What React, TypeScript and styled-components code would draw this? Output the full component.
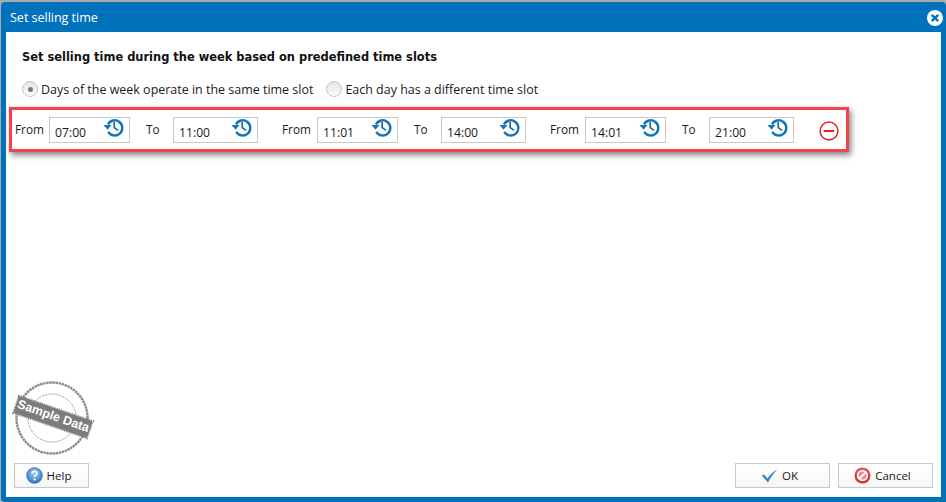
import React from "react";
import styled, { createGlobalStyle } from "styled-components";

const Global = createGlobalStyle`
  html, body { margin: 0; padding: 0; width: 946px; height: 502px; overflow: hidden; background: #a9aaa9; }
  #root { width: 946px; height: 502px; }
  * { box-sizing: border-box; }
`;

const Page = styled.div`
  width: 946px;
  height: 502px;
  padding: 2px 0 0 1px;
  font-family: "DejaVu Sans", sans-serif;
  color: #111;
`;
const Dialog = styled.div`
  width: 945px;
  height: 500px;
  background: #0072bc;
  border-radius: 4px 4px 0 4px;
  padding: 0 5px 5px 5px;
  display: flex;
  flex-direction: column;
`;
const TitleBar = styled.div`
  height: 30px;
  flex: none;
  display: flex;
  align-items: center;
  justify-content: space-between;
  padding: 0 0 0 4px;
  color: #fff;
  font-size: 12.6px;
  letter-spacing: -0.05px;
  font-family: "Open Sans", sans-serif;
`;
const CloseBtn = styled.svg`
  width: 16px;
  height: 16px;
  margin-right: -2px;
  margin-top: 2px;
`;
const Body = styled.div`
  flex: 1;
  width: 935px;
  background: #fff;
  display: flex;
  flex-direction: column;
  padding: 18px 8px 9px 3px;
`;
const Heading = styled.div`
  margin-left: 13px;
  font-weight: 700;
  font-size: 11.44px;
  line-height: 15px;
  height: 15px;
  font-family: "DejaVu Sans", sans-serif;
`;
const RadioRow = styled.div`
  display: flex;
  align-items: center;
  margin: 16px 0 0 13px;
  height: 16px;
`;
const Radio = styled.span<{ $on?: boolean }>`
  width: 16px;
  height: 16px;
  flex: none;
  border-radius: 50%;
  border: 1px solid #c4c4c4;
  background: linear-gradient(#e4e4e4, #fdfdfd);
  display: flex;
  align-items: center;
  justify-content: center;
  &::after {
    content: "";
    width: 5px;
    height: 5px;
    border-radius: 50%;
    background: ${(p) => (p.$on ? "#777" : "transparent")};
  }
`;
const RadioLabel = styled.span<{ $gap: number }>`
  margin: 0 ${(p) => p.$gap}px 0 3px;
  font-family: "Open Sans", sans-serif;
  font-size: 12.47px;
  white-space: nowrap;
  color: #1a1a1a;
`;
const SlotBox = styled.div`
  width: 840px;
  height: 45px;
  margin: 10px 0 0 0;
  border: 3px solid #f4444a;
  box-shadow: 2px 3px 6px rgba(0, 0, 0, 0.5);
  display: flex;
  align-items: flex-start;
  padding: 7px 0 0 3px;
`;
const SlotLabel = styled.span<{ $w: number }>`
  width: ${(p) => p.$w}px;
  flex: none;
  font-family: "Open Sans", sans-serif;
  font-size: 11.8px;
  line-height: 18px;
  margin-top: 3px;
  color: #1a1a1a;
`;
const TimeField = styled.div<{ $w: number; $after: number }>`
  width: ${(p) => p.$w}px;
  margin-right: ${(p) => p.$after}px;
  flex: none;
  height: 26px;
  border: 1px solid #c8c8c8;
  display: flex;
  justify-content: space-between;
  padding: 0 5px 0 5px;
`;
const TimeText = styled.span`
  font-family: "Open Sans", sans-serif;
  font-size: 12.2px;
  line-height: 16px;
  margin-top: 7px;
  color: #1a1a1a;
`;
const ClockIcon = styled.svg`
  width: 21px;
  height: 20px;
  flex: none;
`;
const RemoveIcon = styled.svg`
  width: 20px;
  height: 20px;
  flex: none;
  margin: 4px 0 0 25px;
`;
const Spacer = styled.div`
  flex: 1;
`;
const Stamp = styled.div`
  width: 80px;
  height: 76px;
  margin: 0 0 -2px 5px;
  position: relative;
  flex: none;
`;
const StampRing = styled.svg`
  width: 80px;
  height: 76px;
  display: block;
`;
const StampBand = styled.div`
  position: absolute;
  left: 0;
  top: 27px;
  width: 78px;
  height: 18px;
  background: #7d7b7d;
  outline: 1px dotted #7d7b7d;
  color: #fff;
  font-family: "Liberation Sans", sans-serif;
  font-weight: 700;
  font-size: 12.5px;
  line-height: 17px;
  text-align: center;
  white-space: nowrap;
  transform: rotate(19deg);
`;
const Footer = styled.div`
  display: flex;
  align-items: center;
  margin: 8px 0 0 5px;
  height: 25px;
  flex: none;
`;
const Button = styled.div<{ $w: number; $ml?: string }>`
  width: ${(p) => p.$w}px;
  height: 25px;
  margin-left: ${(p) => p.$ml ?? "0"};
  padding-right: 6px;
  border: 1px solid #c8c8c8;
  background: linear-gradient(#fff, #f6f6f6);
  display: flex;
  align-items: center;
  justify-content: center;
  gap: 4px;
  font-family: "Open Sans", sans-serif;
  font-size: 11.5px;
  color: #1a1a1a;
`;
const BtnIcon = styled.svg`
  width: 17px;
  height: 17px;
  flex: none;
`;

const Clock = () => (
  <ClockIcon viewBox="0 0 21 20">
    <path d="M5 6.4A7.6 7.6 0 1 1 5.2 13.8" fill="none" stroke="#0f75bd" strokeWidth="2.4" />
    <path d="M0.6 7H8.4L4.5 11.8Z" fill="#0f75bd" />
    <path d="M11.2 4V9.6L15 12.4" fill="none" stroke="#1f6498" strokeWidth="1.6" />
  </ClockIcon>
);

const slots: { label: string; w: number; time: string; fw: number; after: number }[] = [
  { label: "From", w: 34, time: "07:00", fw: 81, after: 16 },
  { label: "To", w: 27, time: "11:00", fw: 85, after: 24 },
  { label: "From", w: 35, time: "11:01", fw: 81, after: 16 },
  { label: "To", w: 27, time: "14:00", fw: 85, after: 24 },
  { label: "From", w: 35, time: "14:01", fw: 81, after: 16 },
  { label: "To", w: 27, time: "21:00", fw: 85, after: 0 },
];

export default function App() {
  return (
    <Page>
      <Global />
      <Dialog>
        <TitleBar>
          <span>Set selling time</span>
          <CloseBtn viewBox="0 0 16 16">
            <circle cx="8" cy="8" r="8" fill="#fff" />
            <path d="M4.8 4.8L11.2 11.2M11.2 4.8L4.8 11.2" stroke="#0072bc" strokeWidth="2.4" />
          </CloseBtn>
        </TitleBar>
        <Body>
          <Heading>Set selling time during the week based on predefined time slots</Heading>
          <RadioRow>
            <Radio $on />
            <RadioLabel $gap={13}>Days of the week operate in the same time slot</RadioLabel>
            <Radio />
            <RadioLabel $gap={0}>Each day has a different time slot</RadioLabel>
          </RadioRow>
          <SlotBox>
            {slots.map((s, i) => (
              <React.Fragment key={i}>
                <SlotLabel $w={s.w}>{s.label}</SlotLabel>
                <TimeField $w={s.fw} $after={s.after}>
                  <TimeText>{s.time}</TimeText>
                  <Clock />
                </TimeField>
              </React.Fragment>
            ))}
            <RemoveIcon viewBox="0 0 20 20">
              <circle cx="10" cy="10" r="8.9" fill="none" stroke="#ee1c25" strokeWidth="1.5" />
              <path d="M4.8 10H15.2" stroke="#ee1c25" strokeWidth="2" />
            </RemoveIcon>
          </SlotBox>
          <Spacer />
          <Stamp>
            <StampRing viewBox="0 0 80 76">
              <circle cx="38" cy="37" r="35.5" fill="#fff" stroke="#8a8a8a" strokeWidth="2.4" strokeDasharray="2.5 0.6" />
              <circle cx="38" cy="37" r="24" fill="none" stroke="#9a9a9a" strokeWidth="1" strokeDasharray="2 1" />
            </StampRing>
            <StampBand>Sample Data</StampBand>
          </Stamp>
          <Footer>
            <Button $w={75}>
              <BtnIcon viewBox="0 0 17 17">
                <defs>
                  <radialGradient id="hb" cx="50%" cy="35%" r="65%">
                    <stop offset="0" stopColor="#a5d2f5" />
                    <stop offset="1" stopColor="#2a71c4" />
                  </radialGradient>
                </defs>
                <circle cx="8.5" cy="8.5" r="7.8" fill="url(#hb)" stroke="#2c6cb5" strokeWidth="0.8" />
                <path d="M6 6.6C6 3.6 11 3.6 11 6.4C11 8.2 8.6 8.2 8.6 10" fill="none" stroke="#fff" strokeWidth="1.7" />
                <circle cx="8.6" cy="12.4" r="1.1" fill="#fff" />
              </BtnIcon>
              Help
            </Button>
            <Button $w={95} $ml="auto">
              <BtnIcon viewBox="0 0 17 17">
                <path d="M0.8 8.6L3 7.4L6.6 11.4C9 7.6 12 4.6 16.4 2.4C12.6 6 9.6 10.4 7 15.4Z" fill="#2f86d0" />
              </BtnIcon>
              OK
            </Button>
            <Button $w={95} $ml="8px">
              <BtnIcon viewBox="0 0 17 17">
                <defs>
                  <radialGradient id="cb" cx="50%" cy="35%" r="70%">
                    <stop offset="0" stopColor="#f08080" />
                    <stop offset="1" stopColor="#cf2020" />
                  </radialGradient>
                </defs>
                <circle cx="8.5" cy="8.5" r="8" fill="url(#cb)" />
                <circle cx="8.5" cy="8.5" r="4.8" fill="#ee8a8a" stroke="#fff" strokeWidth="1.6" />
                <path d="M5 12L12 5" stroke="#fff" strokeWidth="2" />
              </BtnIcon>
              Cancel
            </Button>
          </Footer>
        </Body>
      </Dialog>
    </Page>
  );
}
